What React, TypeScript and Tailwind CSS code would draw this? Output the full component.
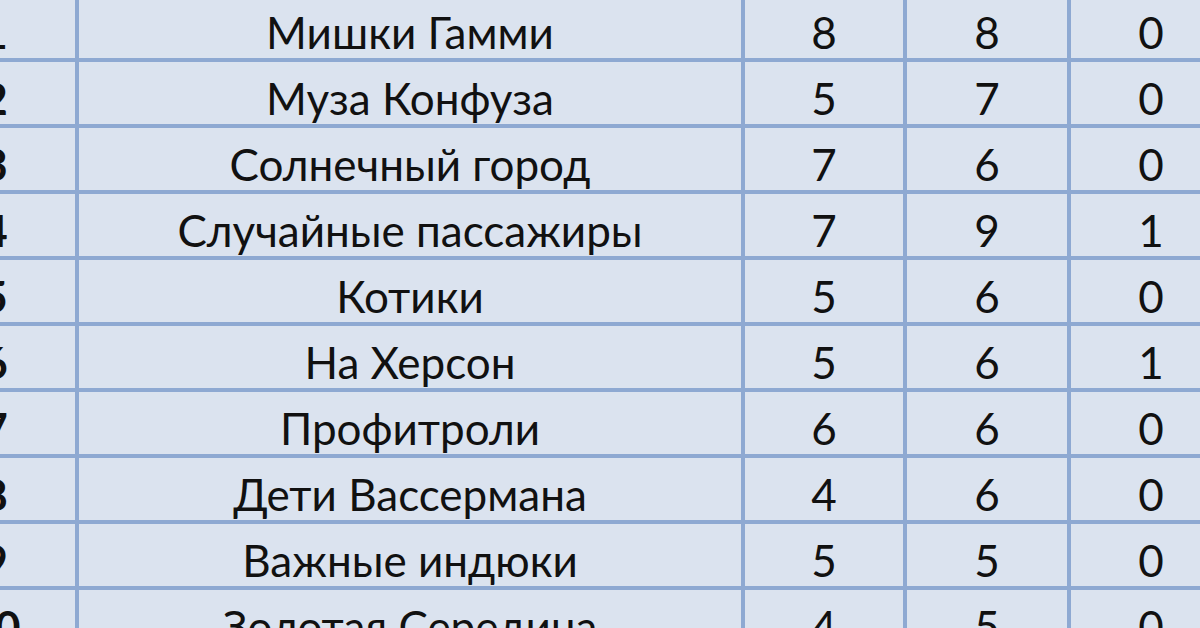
export default function App() {
  const rows: [string, string, string, string, string][] = [
    ['1', 'Мишки Гамми', '8', '8', '0'],
    ['2', 'Муза Конфуза', '5', '7', '0'],
    ['3', 'Солнечный город', '7', '6', '0'],
    ['4', 'Случайные пассажиры', '7', '9', '1'],
    ['5', 'Котики', '5', '6', '0'],
    ['6', 'На Херсон', '5', '6', '1'],
    ['7', 'Профитроли', '6', '6', '0'],
    ['8', 'Дети Вассермана', '4', '6', '0'],
    ['9', 'Важные индюки', '5', '5', '0'],
    ['10', 'Золотая Середина', '4', '5', '0'],
  ]

  const cell = 'h-[66px] pt-[9px] border-r-4 border-b-4 border-[#8ea9d2] flex items-center justify-center text-[44px]'

  return (
    <div className="w-[1200px] h-[628px] overflow-hidden bg-[#dbe3ef] text-[#111]" style={{ fontFamily: 'Lato, "Open Sans", sans-serif' }}>
      <div className="-ml-[85px] -mt-[4px] grid grid-cols-[164px_666px_162px_164px_164px]">
        {rows.map((r) => (
          <div key={r[0]} className="contents">
            <div className={cell + ' font-bold'}>{r[0]}</div>
            <div className={cell}>{r[1]}</div>
            <div className={cell}>{r[2]}</div>
            <div className={cell}>{r[3]}</div>
            <div className={cell}>{r[4]}</div>
          </div>
        ))}
      </div>
    </div>
  )
}
